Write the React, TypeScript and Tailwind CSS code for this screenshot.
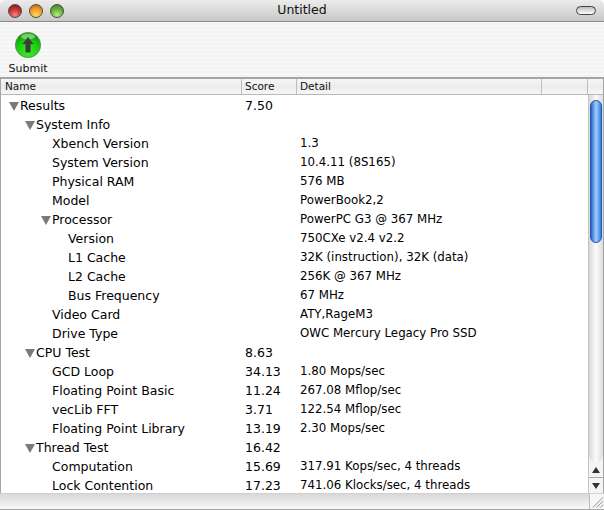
const rows: [number, boolean, string, string, string][] = [
  [0, true, 'Results', '7.50', ''],
  [1, true, 'System Info', '', ''],
  [2, false, 'Xbench Version', '', '1.3'],
  [2, false, 'System Version', '', '10.4.11 (8S165)'],
  [2, false, 'Physical RAM', '', '576 MB'],
  [2, false, 'Model', '', 'PowerBook2,2'],
  [2, true, 'Processor', '', 'PowerPC G3 @ 367 MHz'],
  [3, false, 'Version', '', '750CXe v2.4 v2.2'],
  [3, false, 'L1 Cache', '', '32K (instruction), 32K (data)'],
  [3, false, 'L2 Cache', '', '256K @ 367 MHz'],
  [3, false, 'Bus Frequency', '', '67 MHz'],
  [2, false, 'Video Card', '', 'ATY,RageM3'],
  [2, false, 'Drive Type', '', 'OWC Mercury Legacy Pro SSD'],
  [1, true, 'CPU Test', '8.63', ''],
  [2, false, 'GCD Loop', '34.13', '1.80 Mops/sec'],
  [2, false, 'Floating Point Basic', '11.24', '267.08 Mflop/sec'],
  [2, false, 'vecLib FFT', '3.71', '122.54 Mflop/sec'],
  [2, false, 'Floating Point Library', '13.19', '2.30 Mops/sec'],
  [1, true, 'Thread Test', '16.42', ''],
  [2, false, 'Computation', '15.69', '317.91 Kops/sec, 4 threads'],
  [2, false, 'Lock Contention', '17.23', '741.06 Klocks/sec, 4 threads'],
]

function Light({ color }: { color: string }) {
  return <span className={`w-[14px] h-[14px] rounded-full border border-[#4a4a4a] ${color}`} />
}

function Row({ level, open, name, score, detail }: { level: number; open: boolean; name: string; score: string; detail: string }) {
  const pad = ['pl-[19px]', 'pl-[35px]', 'pl-[51px]', 'pl-[67px]'][level]
  return (
    <div className="flex h-[19px] shrink-0 items-center leading-[19px] text-[#000]">
      <div className={`relative w-[244px] shrink-0 whitespace-nowrap ${pad}`}>
        {open && (
          <span className="absolute top-[6px] w-0 h-0 border-x-[5px] border-x-transparent border-t-[9px] border-t-[#7a7a7a] -ml-[11px]" />
        )}
        {name}
      </div>
      <div className="w-[55px] shrink-0">{score}</div>
      <div className="whitespace-nowrap text-[11.8px]">{detail}</div>
    </div>
  )
}

export default function App() {
  return (
    <div className="w-[604px] h-[510px] overflow-hidden flex flex-col bg-white text-[12.5px] font-['DejaVu_Sans',sans-serif]">
      {/* title bar */}
      <div className="relative h-[22px] shrink-0 flex items-center rounded-t-[5px] border-b border-[#8a8a8a] bg-gradient-to-b from-[#ececec] to-[#c8c8c8]">
        <div className="flex gap-[7px] pl-[8px]">
          <Light color="bg-[radial-gradient(circle_at_50%_85%,#f28a80,#c43030_55%,#7c1414)]" />
          <Light color="bg-[radial-gradient(circle_at_50%_85%,#ffd870,#f09a20_55%,#a86410)]" />
          <Light color="bg-[radial-gradient(circle_at_50%_85%,#b8ec80,#62b038_55%,#2f7a20)]" />
        </div>
        <div className="flex-1 text-center text-[12.5px] text-[#111] pr-[36px]">Untitled</div>
        <span className="w-[20px] h-[9px] mr-[8px] rounded-[5px] border border-[#444] bg-gradient-to-b from-[#bbb] to-[#fff]" />
      </div>

      {/* toolbar */}
      <div className="h-[55px] shrink-0 bg-[repeating-linear-gradient(0deg,#f3f3f3_0px,#f3f3f3_2px,#f8f8f8_2px,#f8f8f8_4px)]">
        <div className="w-[56px] flex flex-col items-center pt-[9px]">
          <svg width="28" height="28" viewBox="0 0 28 28">
            <defs>
              <radialGradient id="ball" cx="50%" cy="80%" r="75%">
                <stop offset="0%" stopColor="#38f026" />
                <stop offset="65%" stopColor="#18c810" />
                <stop offset="100%" stopColor="#0c9208" />
              </radialGradient>
            </defs>
            <circle cx="14" cy="14" r="12.6" fill="url(#ball)" stroke="#5a8a50" strokeWidth="0.8" />
            <ellipse cx="14" cy="5.5" rx="7" ry="3" fill="#bff5b0" opacity="0.55" />
            <path d="M14 6 L19.5 13 H16.5 V21.5 H11.5 V13 H8.5 Z" fill="#3d3d3d" />
          </svg>
          <span className="text-[11px] leading-[14px] mt-[3px] text-[#111]">Submit</span>
        </div>
      </div>

      {/* table */}
      <div className="flex-1 min-h-0 flex flex-col border-t-2 border-l border-r border-[#a6a6a6]">
        <div className="h-[16px] shrink-0 flex items-stretch border-b border-[#b8b8b8] bg-gradient-to-b from-[#f7f7f7] via-[#ececec] to-[#f6f6f6] text-[10.5px] leading-[15px] text-[#111]">
          <div className="w-[241px] pl-[4px] border-r border-[#bdbdbd]">Name</div>
          <div className="w-[55px] pl-[3px] border-r border-[#bdbdbd]">Score</div>
          <div className="w-[245px] pl-[3px] border-r border-[#bdbdbd]">Detail</div>
          <div className="w-[46px] border-r border-[#bdbdbd]" />
        </div>
        <div className="flex-1 min-h-0 flex">
          <div className="flex-1 min-w-0 pt-[1px] overflow-hidden flex flex-col">
            {rows.map((r, i) => (
              <Row key={i} level={r[0]} open={r[1]} name={r[2]} score={r[3]} detail={r[4]} />
            ))}
          </div>
          <div className="w-[15px] shrink-0 flex flex-col border-l border-[#c4c4c4] bg-[#f4f4f4]">
            <div className="flex-1 min-h-0 rounded-b-[7px] pt-[5px] bg-gradient-to-r from-[#d8d8d8] via-[#fbfbfb] to-[#dcdcdc]">
              <div className="h-[143px] mx-[1px] rounded-[7px] border border-[#2458a8] bg-gradient-to-r from-[#1f63c8] via-[#a4d0fa] to-[#2f7ee0]" />
            </div>
            <div className="h-[16px] flex items-center justify-center border-b border-[#a8a8a8]">
              <span className="w-0 h-0 border-x-[4px] border-x-transparent border-b-[6px] border-b-[#333]" />
            </div>
            <div className="h-[15px] flex items-center justify-center">
              <span className="w-0 h-0 border-x-[4px] border-x-transparent border-t-[6px] border-t-[#333]" />
            </div>
          </div>
        </div>
      </div>

      {/* status bar */}
      <div className="h-[17px] shrink-0 flex border-t border-[#d0d0d0] border-b border-b-[#a6a6a6] bg-gradient-to-b from-[#d8d8d8] to-[#fafafa]">
        <div className="flex-1" />
        <svg width="15" height="15" viewBox="0 0 15 15" className="bg-[#f6f6f6] border-l border-[#bbb]">
          <path d="M14 3 L3 14 M14 7 L7 14 M14 11 L11 14" stroke="#8a8a8a" strokeWidth="1" />
        </svg>
      </div>
    </div>
  )
}
